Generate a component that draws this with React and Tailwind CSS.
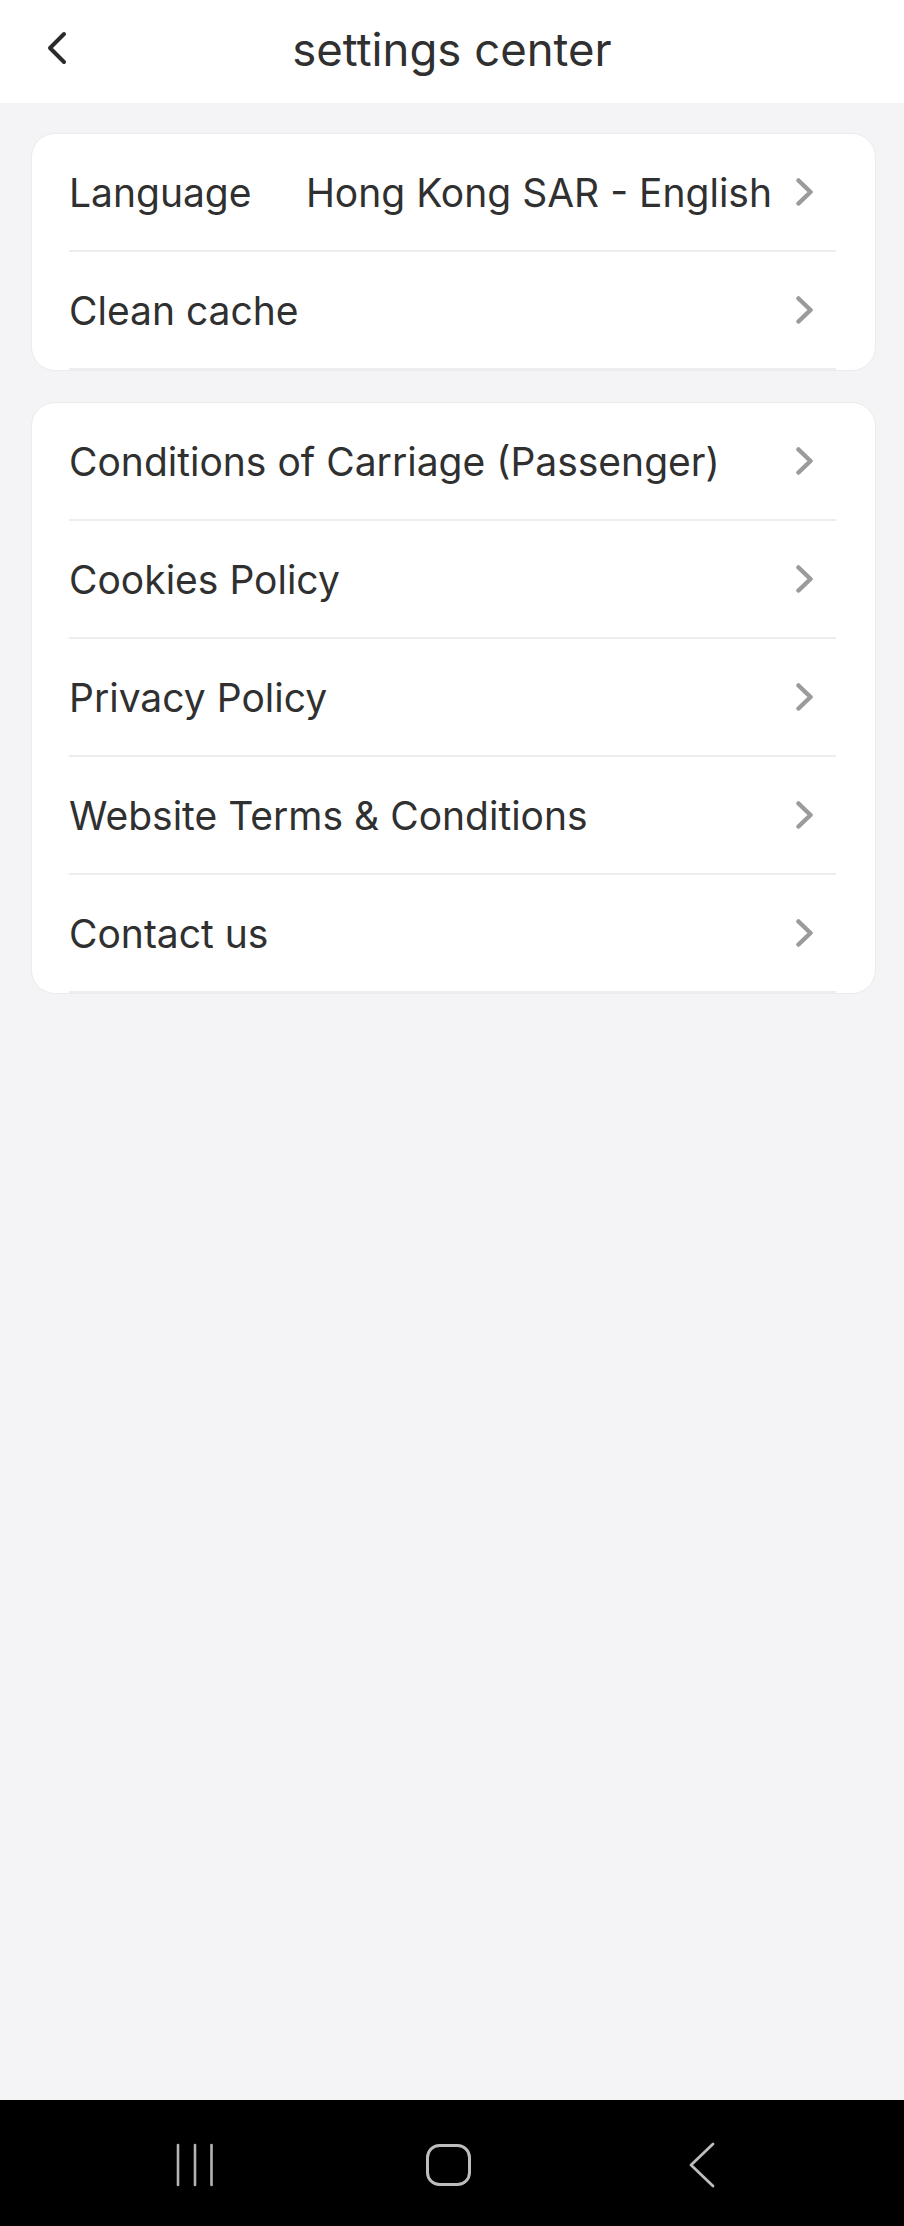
import React from "react";

const FONT = { fontFamily: "Inter, 'Noto Sans', 'Liberation Sans', sans-serif" };

function Chevron() {
  return (
    <svg width="17" height="28" viewBox="0 0 17 28" className="shrink-0 mr-[23px]">
      <path d="M2.5 2.5 L14.5 14 L2.5 25.5" fill="none" stroke="#9b9b9b" strokeWidth="4.5" strokeLinecap="round" strokeLinejoin="round" />
    </svg>
  );
}

function Row({ label, value }) {
  return (
    <div className="h-[118px] border-b-2 border-[#ededed] flex items-center">
      <span className="text-[39px] text-[#303030] leading-none whitespace-nowrap">{label}</span>
      <div className="flex-1" />
      {value && (
        <span className="text-[39px] text-[#303030] leading-none whitespace-nowrap mr-[24px]">{value}</span>
      )}
      <Chevron />
    </div>
  );
}

function Card({ children }) {
  return (
    <div className="bg-white rounded-[24px] border border-[#ebebeb] pl-[37px] pr-[39px] overflow-hidden">
      {children}
    </div>
  );
}

export default function App() {
  return (
    <div className="w-[904px] h-[2226px] bg-[#f4f4f6] flex flex-col" style={FONT}>
      <header className="h-[103px] bg-white grid grid-cols-[1fr_auto_1fr] items-center shrink-0">
        <div className="pl-[46px] flex items-center mb-[8px]">
          <svg width="22" height="36" viewBox="0 0 22 36">
            <path d="M18 4 L4 18 L18 32" fill="none" stroke="#2b2b2b" strokeWidth="4" strokeLinecap="round" strokeLinejoin="round" />
          </svg>
        </div>
        <h1 className="text-[45.5px] text-[#303030] leading-none font-normal mb-[4px]">settings center</h1>
        <div />
      </header>

      <main className="flex-1 pl-[31px] pr-[28px] pt-[30px] flex flex-col gap-[31px]">
        <Card>
          <Row label="Language" value="Hong Kong SAR - English" />
          <Row label="Clean cache" />
        </Card>
        <Card>
          <Row label="Conditions of Carriage (Passenger)" />
          <Row label="Cookies Policy" />
          <Row label="Privacy Policy" />
          <Row label="Website Terms & Conditions" />
          <Row label="Contact us" />
        </Card>
      </main>

      <nav className="h-[126px] bg-black shrink-0 flex items-center pl-[175px] pt-[4px]">
        <svg width="40" height="44" viewBox="0 0 40 44">
          <g stroke="#b4b4b4" strokeWidth="2.6" strokeLinecap="round">
            <line x1="3" y1="2" x2="3" y2="42" />
            <line x1="20" y1="2" x2="20" y2="42" />
            <line x1="36.5" y1="2" x2="36.5" y2="42" />
          </g>
        </svg>
        <svg width="45" height="42" viewBox="0 0 45 42" className="ml-[211px]">
          <rect x="1.5" y="1.5" width="42" height="39" rx="12" fill="none" stroke="#bdbdbd" strokeWidth="3" />
        </svg>
        <svg width="30" height="46" viewBox="0 0 30 46" className="ml-[216px]">
          <path d="M26 2 L4 23 L26 44" fill="none" stroke="#bdbdbd" strokeWidth="2.8" strokeLinecap="round" strokeLinejoin="round" />
        </svg>
      </nav>
    </div>
  );
}
